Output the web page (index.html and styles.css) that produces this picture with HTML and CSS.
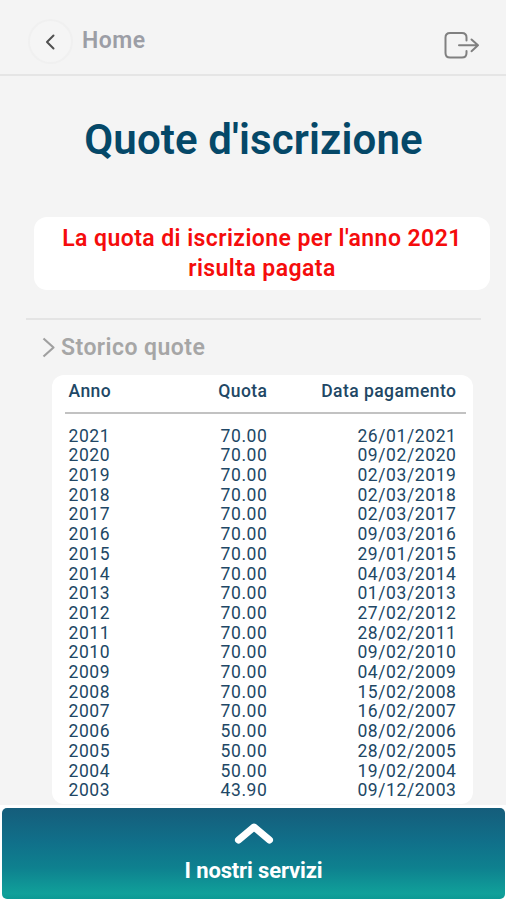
FILE: index.html
```html
<!DOCTYPE html>
<html lang="it">
<head>
<meta charset="utf-8">
<title>Quote d'iscrizione</title>
<link rel="stylesheet" href="styles.css">
</head>
<body>
<header class="topbar">
  <span class="back"><svg width="14" height="18" viewBox="0 0 14 18"><path d="M9.500 2.500 3 9l6.500 6.500"/></svg></span>
  <span class="home">Home</span>
  <svg class="logout" width="36" height="30" viewBox="0 0 36 30"><path d="M22.500 9.500V6.500Q22.500 2 18 2H6Q1.500 2 1.500 6.500V22Q1.500 26.500 6 26.500H18Q22.500 26.500 22.500 22V20M15 14.300H34M27.500 8.500 34 14.300 27.500 20.200"/></svg>
</header>
<main class="content">
  <h1 class="title">Quote d'iscrizione</h1>
  <p class="notice">La quota di iscrizione per l'anno 2021<br>risulta pagata</p>
  <section class="history">
    <h2 class="history-title"><svg width="14" height="22" viewBox="0 0 14 22"><path d="M1.500 1.500 11.500 10.500 1.500 19.500"/></svg><span>Storico quote</span></h2>
    <div class="card">
      <div class="row head"><span>Anno</span><span>Quota</span><span>Data pagamento</span></div>
      <div class="rows">
        <div class="row"><span>2021</span><span>70.00</span><span>26/01/2021</span></div>
        <div class="row"><span>2020</span><span>70.00</span><span>09/02/2020</span></div>
        <div class="row"><span>2019</span><span>70.00</span><span>02/03/2019</span></div>
        <div class="row"><span>2018</span><span>70.00</span><span>02/03/2018</span></div>
        <div class="row"><span>2017</span><span>70.00</span><span>02/03/2017</span></div>
        <div class="row"><span>2016</span><span>70.00</span><span>09/03/2016</span></div>
        <div class="row"><span>2015</span><span>70.00</span><span>29/01/2015</span></div>
        <div class="row"><span>2014</span><span>70.00</span><span>04/03/2014</span></div>
        <div class="row"><span>2013</span><span>70.00</span><span>01/03/2013</span></div>
        <div class="row"><span>2012</span><span>70.00</span><span>27/02/2012</span></div>
        <div class="row"><span>2011</span><span>70.00</span><span>28/02/2011</span></div>
        <div class="row"><span>2010</span><span>70.00</span><span>09/02/2010</span></div>
        <div class="row"><span>2009</span><span>70.00</span><span>04/02/2009</span></div>
        <div class="row"><span>2008</span><span>70.00</span><span>15/02/2008</span></div>
        <div class="row"><span>2007</span><span>70.00</span><span>16/02/2007</span></div>
        <div class="row"><span>2006</span><span>50.00</span><span>08/02/2006</span></div>
        <div class="row"><span>2005</span><span>50.00</span><span>28/02/2005</span></div>
        <div class="row"><span>2004</span><span>50.00</span><span>19/02/2004</span></div>
        <div class="row"><span>2003</span><span>43.90</span><span>09/12/2003</span></div>
      </div>
    </div>
  </section>
</main>
<footer class="dock">
  <div class="services">
    <svg width="40" height="26" viewBox="0 0 40 26"><path d="M4.500 20 20 7 35.500 20"/></svg>
    <span class="services-label">I nostri servizi</span>
  </div>
</footer>
</body>
</html>
```
FILE: styles.css
```css
* { box-sizing: border-box; }
body {
  margin: 0;
  height: 900px;
  overflow: hidden;
  display: flex;
  flex-direction: column;
  background: #f4f4f4;
  font-family: Roboto, "Liberation Sans", sans-serif;
}
svg { display: block; fill: none; stroke-linecap: round; stroke-linejoin: round; }
.topbar {
  height: 76px;
  flex: none;
  display: flex;
  align-items: flex-start;
  padding: 19px 26px 0 28px;
  border-bottom: 2px solid #e5e5e5;
}
.back {
  width: 45px;
  height: 45px;
  border: 2px solid #f0f0f0;
  border-radius: 50%;
  background: #f5f5f5;
  display: flex;
  align-items: center;
  justify-content: center;
}
.back svg { stroke: #505050; stroke-width: 2; }
.home {
  margin: 8px 0 0 9px;
  flex: 1;
  font-size: 23px;
  line-height: 28px;
  font-weight: 600;
  letter-spacing: 0.5px;
  color: #9c9ea6;
}
.logout { margin-top: 12px; stroke: #808080; stroke-width: 2; }
.content { flex: 1; min-height: 0; }
.title {
  margin: 39px 0 0;
  padding-left: 1px;
  text-align: center;
  font-size: 42px;
  line-height: 50px;
  font-weight: 600;
  letter-spacing: 0.12px;
  color: #054868;
}
.notice {
  margin: 52px 16px 0 34px;
  height: 73px;
  padding-top: 7px;
  border-radius: 13px;
  background: #fff;
  text-align: center;
  font-size: 23px;
  line-height: 30px;
  font-weight: 600;
  letter-spacing: 0.43px;
  color: #f50c0c;
}
.history {
  margin: 28px 25px 0 26px;
  border-top: 2px solid #e4e4e4;
}
.history-title {
  margin: 13px 0 0 16px;
  display: flex;
  align-items: center;
  gap: 5px;
  font-size: 23px;
  line-height: 30px;
  font-weight: 600;
  letter-spacing: 0.45px;
  color: #a6a6a6;
}
.history-title svg { stroke: #a0a0a0; stroke-width: 2.2; stroke-linecap: butt; }
.card {
  margin: 12px 8px 0 26px;
  height: 429px;
  padding: 0 7px 0 13px;
  border-radius: 12px;
  background: #fff;
  color: #214765;
}
.row {
  display: grid;
  grid-template-columns: 104px 95px 1fr;
  padding: 0 9.5px 0 3.5px;
  font-size: 17.500px;
  line-height: 19.700px;
  letter-spacing: 0.600px;
}
.row span { text-align: right; white-space: nowrap; }
.row span:first-child { text-align: left; }
.head {
  height: 39px;
  padding-top: 7px;
  border-bottom: 2px solid #c2c2c2;
  font-weight: 500;
  letter-spacing: 0.450px;
}
.rows { padding-top: 12.6px; }
.dock {
  height: 95px;
  flex: none;
  padding: 3px 1px 1px 2px;
  background: #fff;
}
.services {
  height: 91px;
  border-radius: 5px;
  background: linear-gradient(#155d7b, #10708a 38%, #0e818f 66%, #10a09a 94%, #0c9994);
  display: flex;
  flex-direction: column;
  align-items: center;
  padding-top: 12px;
  color: #fff;
}
.services svg { stroke: #fff; stroke-width: 7; }
.services-label {
  margin-top: 12px;
  font-size: 22px;
  line-height: 26px;
  font-weight: 700;
  letter-spacing: -0.15px;
}
```
